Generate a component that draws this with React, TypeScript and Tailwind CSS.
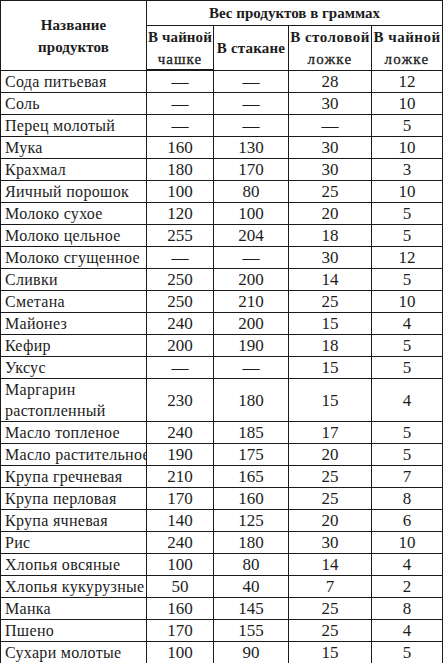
import React from "react";

const rows: [string, string, string, string, string][] = [
  ["Сода питьевая", "—", "—", "28", "12"],
  ["Соль", "—", "—", "30", "10"],
  ["Перец молотый", "—", "—", "—", "5"],
  ["Мука", "160", "130", "30", "10"],
  ["Крахмал", "180", "170", "30", "3"],
  ["Яичный порошок", "100", "80", "25", "10"],
  ["Молоко сухое", "120", "100", "20", "5"],
  ["Молоко цельное", "255", "204", "18", "5"],
  ["Молоко сгущенное", "—", "—", "30", "12"],
  ["Сливки", "250", "200", "14", "5"],
  ["Сметана", "250", "210", "25", "10"],
  ["Майонез", "240", "200", "15", "4"],
  ["Кефир", "200", "190", "18", "5"],
  ["Уксус", "—", "—", "15", "5"],
  ["Маргарин растопленный", "230", "180", "15", "4"],
  ["Масло топленое", "240", "185", "17", "5"],
  ["Масло растительное", "190", "175", "20", "5"],
  ["Крупа гречневая", "210", "165", "25", "7"],
  ["Крупа перловая", "170", "160", "25", "8"],
  ["Крупа ячневая", "140", "125", "20", "6"],
  ["Рис", "240", "180", "30", "10"],
  ["Хлопья овсяные", "100", "80", "14", "4"],
  ["Хлопья кукурузные", "50", "40", "7", "2"],
  ["Манка", "160", "145", "25", "8"],
  ["Пшено", "170", "155", "25", "4"],
  ["Сухари молотые", "100", "90", "15", "5"],
];

const head =
  "bg-white flex flex-col items-center justify-center text-[15px] font-bold leading-[22px] text-[#1c1c1c]";

export default function App() {
  return (
    <div className="bg-white w-[443px] h-[663px] [font-family:'Liberation_Serif',serif] text-[#1c1c1c]">
      <div className="grid grid-cols-[145px_66px_74px_82px_70px] gap-px bg-[#1a1a1a] border border-[#1a1a1a]">
        <div className={head + " row-span-2 tracking-[0.1px]"}>
          <div>Название</div>
          <div>продуктов</div>
        </div>
        <div className={head + " col-span-4 h-[24px] tracking-[0px]"}>
          Вес продуктов в граммах
        </div>
        <div className={head + " h-[43px] tracking-[0.1px]"}>
          <div>В чайной</div>
          <div className="tracking-[1px] font-normal [-webkit-text-stroke:0.3px_#1c1c1c]">чашке</div>
        </div>
        <div className={head + " tracking-[0.2px]"}>В стакане</div>
        <div className={head + " tracking-[0.5px]"}>
          <div>В столовой</div>
          <div className="tracking-[1.3px] font-normal [-webkit-text-stroke:0.3px_#1c1c1c]">ложке</div>
        </div>
        <div className={head + " tracking-[0.5px]"}>
          <div>В чайной</div>
          <div className="tracking-[1.3px] font-normal [-webkit-text-stroke:0.3px_#1c1c1c]">ложке</div>
        </div>
        {rows.map((r) => {
          const tall = r[0] === "Маргарин растопленный";
          return (
            <React.Fragment key={r[0]}>
              <div
                className={
                  "bg-white flex flex-col justify-center pl-[4px] text-[16px] leading-[21px] tracking-[0.3px] whitespace-nowrap " +
                  (tall ? "h-[42px]" : "h-[21px]")
                }
              >
                {tall ? (
                  <>
                    <div>Маргарин</div>
                    <div>растопленный</div>
                  </>
                ) : (
                  r[0]
                )}
              </div>
              {r.slice(1).map((v, i) => (
                <div
                  key={i}
                  className="bg-white flex items-center justify-center text-[17px] leading-[21px]"
                >
                  {v}
                </div>
              ))}
            </React.Fragment>
          );
        })}
      </div>
    </div>
  );
}
